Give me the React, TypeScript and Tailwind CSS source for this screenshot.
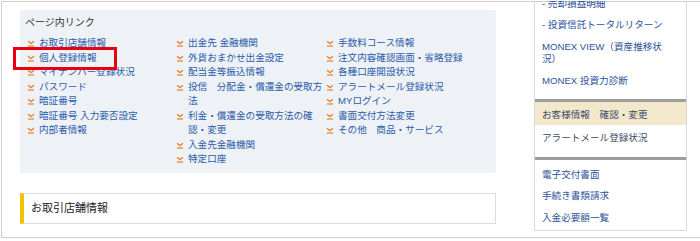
const COL1 = [
  "お取引店舗情報",
  "個人登録情報",
  "マイナンバー登録状況",
  "パスワード",
  "暗証番号",
  "暗証番号 入力要否設定",
  "内部者情報",
];
const COL2 = [
  "出金先 金融機関",
  "外貨おまかせ出金設定",
  "配当金等振込情報",
  "投信　分配金・償還金の受取方法",
  "利金・償還金の受取方法の確認・変更",
  "入金先金融機関",
  "特定口座",
];
const COL3 = [
  "手数料コース情報",
  "注文内容確認画面・省略登録",
  "各種口座開設状況",
  "アラートメール登録状況",
  "MYログイン",
  "書面交付方法変更",
  "その他　商品・サービス",
];

const FONT = { fontFamily: '"Liberation Sans", "Noto Sans CJK JP", sans-serif' };

function Arrow() {
  return (
    <svg width="8" height="7" viewBox="0 0 8 7" className="mt-[4px]">
      <path d="M1 1.2 L4 3.6 L7 1.2" fill="none" stroke="#e5822c" strokeWidth="1.3" />
      <path d="M1 6 H7" stroke="#e5822c" strokeWidth="1.2" />
    </svg>
  );
}

function LinkCol({ items, w }: { items: string[]; w: string }) {
  return (
    <ul className={`${w} flex flex-col`}>
      {items.map((t) => (
        <li key={t} className="flex items-start text-[9.6px] leading-[14.5px] text-[#2a5ba8]">
          <span className="w-[12px] shrink-0 flex">
            <Arrow />
          </span>
          <span className="flex-1">{t}</span>
        </li>
      ))}
    </ul>
  );
}

function SideItem({ children, cls = "" }: { children: React.ReactNode; cls?: string }) {
  return (
    <div className={`pl-[7px] pr-[19px] py-[4.5px] text-[9.6px] leading-[12.5px] text-[#2b5299] ${cls}`}>
      {children}
    </div>
  );
}

export default function App() {
  return (
    <div className="relative w-[700px] h-[241px] bg-white overflow-hidden" style={FONT}>
      <div className="ml-[1px] mt-[1px] h-[237px] border-t border-l border-b border-[#cfcfcf] flex">
        {/* main column */}
        <div className="w-[532px] shrink-0 pl-[18px] pt-[8px]">
          <div className="w-[476px] h-[163px] bg-[#eef2f7] rounded-[2px] pl-[7px] pt-[6px]">
            <div className="text-[10px] leading-[14px] text-[#333] -ml-[2px]">ページ内リンク</div>
            <div className="flex mt-[6px]">
              <LinkCol items={COL1} w="w-[149px]" />
              <LinkCol items={COL2} w="w-[150px]" />
              <LinkCol items={COL3} w="w-[160px]" />
            </div>
          </div>
          <div className="mt-[20px] w-[476px] h-[31px] border border-[#dcdcdc] border-l-[4px] border-l-[#f2c200] flex items-center pl-[7px]">
            <span className="text-[11px] text-[#222]">お取引店舗情報</span>
          </div>
        </div>

        {/* sidebar */}
        <div className="w-[153px] shrink-0 h-[230px] -mt-[1px] border-l border-r border-b border-[#d8d8d8] overflow-hidden">
          <div className="-mt-[8px]">
            <SideItem>- 売却損益明細</SideItem>
            <SideItem>- 投資信託トータルリターン</SideItem>
            <SideItem>MONEX VIEW（資産推移状況）</SideItem>
            <SideItem>MONEX 投資力診断</SideItem>
          </div>
          <div className="mt-[7px] h-[3px] bg-[#9d9d9d]" />
          <SideItem cls="bg-[#f3e8cc] text-[#3d4b66] pt-[7px] pb-[4px]">お客様情報　確認・変更</SideItem>
          <SideItem cls="text-[#3d4b66] pt-[7px]">アラートメール登録状況</SideItem>
          <div className="mt-[8px] h-[3px] bg-[#9d9d9d]" />
          <div className="pt-[4px]">
            <SideItem>電子交付書面</SideItem>
            <SideItem>手続き書類請求</SideItem>
            <SideItem>入金必要額一覧</SideItem>
          </div>
        </div>
      </div>

      {/* highlight box */}
      <div className="absolute left-[13px] top-[47px] w-[104px] h-[23px] border-[3px] border-[#e60012]" />
    </div>
  );
}
